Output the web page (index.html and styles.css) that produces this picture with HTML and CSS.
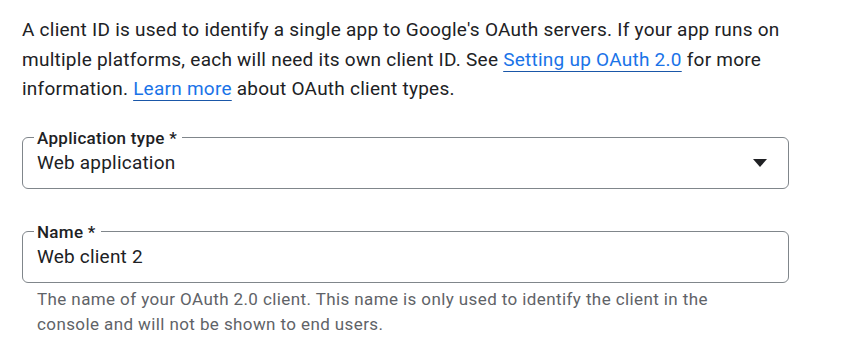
FILE: index.html
```html
<!DOCTYPE html>
<html>
<head>
<meta charset="utf-8">
<link rel="stylesheet" href="styles.css">
</head>
<body>
<div class="page">
  <p class="intro">A client ID is used to identify a single app to Google's OAuth servers. If your app runs on multiple platforms, each will need its own client ID. See <a href="#">Setting up OAuth 2.0</a> for more information. <a href="#">Learn more</a> about OAuth client types.</p>

  <fieldset class="field select">
    <legend>Application type *</legend>
    <div class="value">
      <span>Web application</span>
      <svg class="arrow" width="14" height="8" viewBox="0 0 14 8"><path d="M0 0 L14 0 L7 8 Z" fill="#202124"/></svg>
    </div>
  </fieldset>

  <fieldset class="field name">
    <legend>Name *</legend>
    <div class="value"><span>Web client 2</span></div>
  </fieldset>
  <p class="hint">The name of your OAuth 2.0 client. This name is only used to identify the client in the console and will not be shown to end users.</p>
</div>
</body>
</html>
```
FILE: styles.css
```css
html, body { margin: 0; padding: 0; background: #fff; }
body { font-family: Roboto, "Noto Sans", sans-serif; color: #202124; }
.page { padding: 15px 0 0 22px; width: 767px; }
.intro { margin: 0; font-size: 19px; line-height: 29.5px; letter-spacing: 0.25px; width: 768px; }
.intro a { color: #1a73e8; text-decoration: underline; text-decoration-color: #1a57a8; text-underline-offset: 5px; text-decoration-thickness: 1px; }
.field { margin: 0; padding: 0 14px 13px; border: 1px solid #80868b; border-radius: 6px; min-width: 0; }
.select { margin-top: 25px; }
.name { margin-top: 34px; }
.field legend { font-size: 17px; font-weight: 500; padding: 0 5px 0 3px; margin-left: -3px; line-height: 18px; letter-spacing: 0.3px; color: #202124; }
.value { display: flex; align-items: center; justify-content: space-between; font-size: 19px; line-height: 24px; letter-spacing: 0.2px; margin-top: 4px; }
.arrow { margin-right: 7px; }
.hint { margin: 4px 0 0 15px; font-size: 17px; line-height: 25px; letter-spacing: 0.4px; color: #5f6368; width: 700px; }
```
